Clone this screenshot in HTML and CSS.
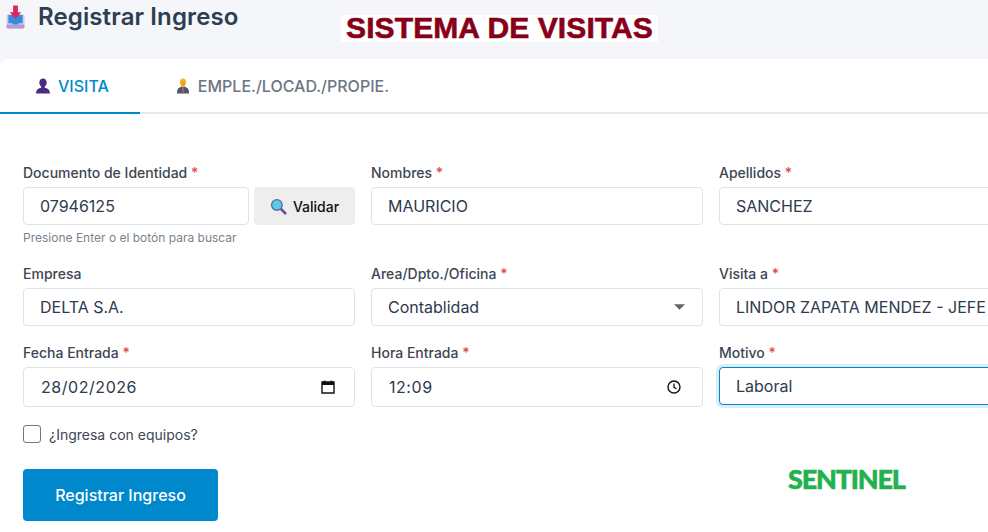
FILE: index.html
```html
<!DOCTYPE html>
<html lang="es">
<head>
  <meta charset="UTF-8" />
  <title>Registrar Ingreso</title>
  <link rel="stylesheet" href="styles.css">
</head>
<body>
  <div class="page-title">
    <svg class="title-icon" viewBox="0 0 20 24" xmlns="http://www.w3.org/2000/svg">
      <rect x="0.5" y="9" width="19" height="15" rx="2" fill="#d9c8e6"/>
      <rect x="0.5" y="20" width="19" height="4" rx="1.5" fill="#b79ad0"/>
      <path d="M2.5 10h15v8.5h-4l-1 1.5h-5l-1-1.5h-4z" fill="#2f8fdc"/>
      <path d="M7.5 0h5v7h3.5L10 14 4 7h3.5z" fill="#e0245e"/>
    </svg>
    <h1>Registrar Ingreso</h1>
  </div>
  <div class="banner">SISTEMA DE VISITAS</div>

  <div class="card">
    <div class="tabs">
      <div class="tab active">
        <svg class="tab-icon" viewBox="0 0 16 16" xmlns="http://www.w3.org/2000/svg">
          <path d="M8 0.5c2.3 0 3.700 1.800 3.700 4 0 1.700-.8 3.200-1.900 4v1.200c2.600.6 5 1.700 5.200 5.800H1c.2-4.100 2.600-5.200 5.200-5.800V8.500c-1.100-.8-1.900-2.300-1.900-4 0-2.200 1.400-4 3.700-4z" fill="#4b2a83"/>
        </svg>
        VISITA
      </div>
      <div class="tab">
        <svg class="tab-icon" viewBox="0 0 16 16" xmlns="http://www.w3.org/2000/svg">
          <path d="M2 15.500c0-4 1-6 4-6.500h4c3 .5 4 2.500 4 6.500z" fill="#4f5672"/>
          <path d="M7 9h2l-.3 6.500H7.300z" fill="#8d6e63"/>
          <path d="M4.800 4c0-2 1.300-3.500 3.200-3.500S11.200 2 11.200 4c0 1.500-.6 2.500-1.200 3.300V9H6V7.300C5.400 6.500 4.800 5.500 4.800 4z" fill="#f2b233"/>
          <ellipse cx="8" cy="5.500" rx="2" ry="2.500" fill="#eb9f2e"/>
        </svg>
        EMPLE./LOCAD./PROPIE.
      </div>
    </div>

    <form class="form">
      <div class="row row-first">
        <div class="field">
          <label class="label">Documento de Identidad <span class="req">*</span></label>
          <div class="input-group">
            <input class="control" type="text" value="07946125">
            <button class="btn-validate" type="button">
              <svg class="lens" viewBox="0 0 16 16" xmlns="http://www.w3.org/2000/svg">
                <path d="M10 10l4.300 4.300" stroke="#7b4a94" stroke-width="2.600" stroke-linecap="round"/>
                <circle cx="6.500" cy="6.500" r="5" fill="#5cc8ea" stroke="#59709c" stroke-width="1.300"/>
              </svg>
              Validar
            </button>
          </div>
          <small class="help">Presione Enter o el botón para buscar</small>
        </div>
        <div class="field">
          <label class="label">Nombres <span class="req">*</span></label>
          <input class="control" type="text" value="MAURICIO">
        </div>
        <div class="field">
          <label class="label">Apellidos <span class="req">*</span></label>
          <input class="control" type="text" value="SANCHEZ">
        </div>
      </div>

      <div class="row">
        <div class="field">
          <label class="label">Empresa</label>
          <input class="control" type="text" value="DELTA S.A.">
        </div>
        <div class="field">
          <label class="label">Area/Dpto./Oficina <span class="req">*</span></label>
          <div class="control control-icon">
            Contablidad
            <svg class="caret" viewBox="0 0 12 6" xmlns="http://www.w3.org/2000/svg"><path d="M0 0h12L6 6z" fill="#5f666d"/></svg>
          </div>
        </div>
        <div class="field">
          <label class="label">Visita a <span class="req">*</span></label>
          <input class="control" type="text" value="LINDOR ZAPATA MENDEZ - JEFE DE CONTABILIDAD">
        </div>
      </div>

      <div class="row row-last">
        <div class="field">
          <label class="label">Fecha Entrada <span class="req">*</span></label>
          <div class="control control-icon control-tall">
            <span class="spaced">28/02/2026</span>
            <svg class="picker" viewBox="0 0 14 14" xmlns="http://www.w3.org/2000/svg">
              <path d="M1 2h12v11H1z" fill="none" stroke="#111" stroke-width="1.400"/>
              <path d="M1 2h12v3H1z" fill="#111"/>
              <path d="M3.500 0.500v2M10.500 0.500v2" stroke="#111" stroke-width="1.400"/>
            </svg>
          </div>
        </div>
        <div class="field">
          <label class="label">Hora Entrada <span class="req">*</span></label>
          <div class="control control-icon control-tall">
            <span class="spaced">12:09</span>
            <svg class="picker picker-clock" viewBox="0 0 14 14" xmlns="http://www.w3.org/2000/svg">
              <circle cx="7" cy="7" r="6" fill="none" stroke="#111" stroke-width="1.400"/>
              <path d="M7 3.500V7.300l2.600 1.500" fill="none" stroke="#111" stroke-width="1.300"/>
            </svg>
          </div>
        </div>
        <div class="field">
          <label class="label">Motivo <span class="req">*</span></label>
          <input class="control control-focus" type="text" value="Laboral">
        </div>
      </div>

      <label class="check">
        <input class="check-box" type="checkbox">
        ¿Ingresa con equipos?
      </label>

      <button class="btn-submit" type="button">Registrar Ingreso</button>
    </form>

    <div class="brand">SENTINEL</div>
  </div>
</body>
</html>
```

FILE: styles.css
```css
html, body {
  margin: 0;
  padding: 0;
  height: 100%;
  overflow: hidden;
  background-color: #f4f6fa;
  font-family: Inter, 'Noto Sans', sans-serif;
  color: #2e3a4d;
}
.page-title {
  display: flex;
  align-items: center;
  gap: 13px;
  height: 59px;
  padding: 0 0 25px 6px;
  box-sizing: border-box;
}
.title-icon {
  width: 19px;
  height: 24px;
  flex-shrink: 0;
}
.page-title h1 {
  margin: 0;
  font-size: 24px;
  font-weight: 600;
  letter-spacing: 0.12px;
  color: #2c3e50;
  line-height: 34px;
}
.banner {
  position: absolute;
  top: 15px;
  left: 341px;
  width: 317px;
  height: 27px;
  background: #fff;
  color: #880018;
  font-family: 'Liberation Sans', Arial, sans-serif;
  font-size: 30px;
  font-weight: 700;
  line-height: 26px;
  letter-spacing: 0.1px;
  -webkit-text-stroke: 0.6px #880018;
  text-align: center;
  white-space: nowrap;
}
.card {
  position: relative;
  width: 1100px;
  height: 473px;
  background: #fff;
  border-radius: 8px 0 0 0;
}
.tabs {
  display: flex;
  height: 55px;
  box-sizing: border-box;
  border-bottom: 2px solid #e4e8ec;
}
.tab {
  display: flex;
  align-items: center;
  gap: 7px;
  height: 55px;
  box-sizing: border-box;
  padding: 0 34px 2px 35px;
  font-size: 16px;
  font-weight: 500;
  color: #6b7683;
}
.tab.active {
  color: #0088cc;
  border-bottom: 2px solid #0088cc;
  padding: 0 31px 0 35px;
}
.tab-icon {
  width: 16px;
  height: 16px;
  flex-shrink: 0;
}
.form {
  padding: 52px 0 0 23px;
}
.row {
  display: grid;
  grid-template-columns: 332px 332px 332px;
  column-gap: 16px;
  margin-bottom: 20px;
}
.row-first {
  margin-bottom: 22px;
}
.row-last {
  margin-bottom: 17px;
}
.label {
  display: block;
  font-size: 14px;
  font-weight: 500;
  line-height: 14px;
  margin-bottom: 7px;
  color: #3d4652;
}
.req {
  color: #e5484d;
}
.control {
  display: block;
  width: 100%;
  height: 38px;
  box-sizing: border-box;
  padding: 0 16px;
  border: 1px solid #dfe3e8;
  border-radius: 4px;
  background: #fff;
  font-family: Inter, 'Noto Sans', sans-serif;
  font-size: 16px;
  color: #2e3a4d;
  line-height: 36px;
  outline: none;
}
.control-icon {
  display: flex;
  align-items: center;
  justify-content: space-between;
  padding-right: 17px;
}
.control-tall {
  height: 40px;
  line-height: 38px;
  padding-right: 19px;
}
.spaced {
  letter-spacing: 0.55px;
  padding-left: 1px;
}
.control-focus {
  border-color: #0088cc;
  box-shadow: 0 0 0 3px #d9eef8;
}
.caret {
  width: 11px;
  height: 6px;
}
.picker {
  width: 14px;
  height: 14px;
}
.picker-clock {
  margin-right: 2px;
}
.input-group {
  display: flex;
  gap: 5px;
}
.input-group .control {
  width: 226px;
  flex-shrink: 0;
}
.btn-validate {
  display: flex;
  align-items: center;
  justify-content: center;
  gap: 6px;
  width: 101px;
  height: 38px;
  padding: 0;
  border: none;
  border-radius: 4px;
  background: #eeeeee;
  font-family: Inter, 'Noto Sans', sans-serif;
  font-size: 14px;
  font-weight: 500;
  color: #111;
}
.lens {
  width: 17px;
  height: 17px;
}
.help {
  display: block;
  margin-top: 5px;
  font-size: 12px;
  line-height: 15px;
  color: #7a828c;
}
.check {
  display: flex;
  align-items: center;
  gap: 8px;
  font-size: 14px;
  color: #3d4652;
  margin-bottom: 25px;
  height: 20px;
}
.check-box {
  appearance: none;
  width: 18px;
  height: 18px;
  margin: 0;
  border: 1px solid #777;
  border-radius: 3px;
  background: #fff;
  flex-shrink: 0;
}
.btn-submit {
  display: block;
  width: 195px;
  height: 52px;
  padding: 0;
  border: none;
  border-radius: 4px;
  background: #0088cc;
  color: #fff;
  font-family: Inter, 'Noto Sans', sans-serif;
  font-size: 16px;
  font-weight: 500;
}
.brand {
  position: absolute;
  left: 788px;
  top: 406px;
  font-family: Lato, sans-serif;
  font-size: 27px;
  font-weight: 900;
  line-height: 28px;
  letter-spacing: -1.2px;
  -webkit-text-stroke: 0.5px #22b14c;
  color: #22b14c;
  white-space: nowrap;
}
```
